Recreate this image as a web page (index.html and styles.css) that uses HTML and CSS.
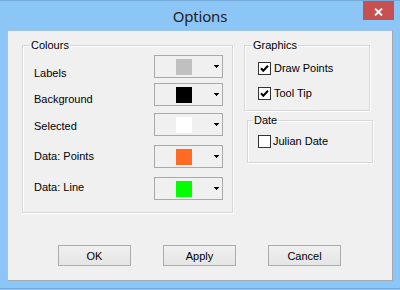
FILE: index.html
```html
<!DOCTYPE html>
<html>
<head>
<meta charset="utf-8">
<link rel="stylesheet" href="styles.css">
</head>
<body>
<div class="window">
  <div class="titlebar">
    <span class="spacer"></span>
    <div class="title">Options</div>
    <div class="close-wrap">
      <button class="close" aria-label="Close">
        <svg width="9" height="8" viewBox="0 0 9 8"><path d="M1 0.5 L8 7.5 M8 0.5 L1 7.5" stroke="#fff" stroke-width="1.8" fill="none"/></svg>
      </button>
    </div>
  </div>
  <div class="client">
    <div class="top">
      <fieldset class="group colours">
        <legend>Colours</legend>
        <div class="row r1"><span class="lbl">Labels</span><div class="picker"><span class="swatch sw-grey"></span><svg class="arrow" width="5" height="3" viewBox="0 0 5 3" shape-rendering="crispEdges"><rect x="0" y="0" width="5" height="1"/><rect x="1" y="1" width="3" height="1"/><rect x="2" y="2" width="1" height="1"/></svg></div></div>
        <div class="row r2"><span class="lbl">Background</span><div class="picker"><span class="swatch sw-black"></span><svg class="arrow" width="5" height="3" viewBox="0 0 5 3" shape-rendering="crispEdges"><rect x="0" y="0" width="5" height="1"/><rect x="1" y="1" width="3" height="1"/><rect x="2" y="2" width="1" height="1"/></svg></div></div>
        <div class="row r3"><span class="lbl">Selected</span><div class="picker"><span class="swatch sw-white"></span><svg class="arrow" width="5" height="3" viewBox="0 0 5 3" shape-rendering="crispEdges"><rect x="0" y="0" width="5" height="1"/><rect x="1" y="1" width="3" height="1"/><rect x="2" y="2" width="1" height="1"/></svg></div></div>
        <div class="row r4"><span class="lbl">Data: Points</span><div class="picker"><span class="swatch sw-orange"></span><svg class="arrow" width="5" height="3" viewBox="0 0 5 3" shape-rendering="crispEdges"><rect x="0" y="0" width="5" height="1"/><rect x="1" y="1" width="3" height="1"/><rect x="2" y="2" width="1" height="1"/></svg></div></div>
        <div class="row r5"><span class="lbl">Data: Line</span><div class="picker"><span class="swatch sw-green"></span><svg class="arrow" width="5" height="3" viewBox="0 0 5 3" shape-rendering="crispEdges"><rect x="0" y="0" width="5" height="1"/><rect x="1" y="1" width="3" height="1"/><rect x="2" y="2" width="1" height="1"/></svg></div></div>
      </fieldset>
      <div class="side">
        <fieldset class="group graphics">
          <legend>Graphics</legend>
          <label class="check c1"><svg class="box" width="13" height="13" viewBox="0 0 13 13"><rect x="0.5" y="0.5" width="12" height="12" fill="#fff" stroke="#333"/><path d="M3 6.3 L5.3 8.8 L10 3.8" stroke="#000" stroke-width="2" fill="none"/></svg><span>Draw Points</span></label>
          <label class="check c2"><svg class="box" width="13" height="13" viewBox="0 0 13 13"><rect x="0.5" y="0.5" width="12" height="12" fill="#fff" stroke="#333"/><path d="M3 6.3 L5.3 8.8 L10 3.8" stroke="#000" stroke-width="2" fill="none"/></svg><span>Tool Tip</span></label>
        </fieldset>
        <fieldset class="group date">
          <legend>Date</legend>
          <label class="check c3"><svg class="box" width="13" height="13" viewBox="0 0 13 13"><rect x="0.5" y="0.5" width="12" height="12" fill="#fff" stroke="#333"/></svg><span>Julian Date</span></label>
        </fieldset>
      </div>
    </div>
    <div class="buttons">
      <button class="btn">OK</button>
      <button class="btn">Apply</button>
      <button class="btn">Cancel</button>
    </div>
  </div>
</div>
</body>
</html>
```

FILE: styles.css
```css
html, body {
  margin: 0;
  padding: 0;
  background: #8cc6f6;
}
body {
  font-family: "Liberation Sans", Arial, sans-serif;
  font-size: 11px;
  color: #000;
}
.window {
  width: 400px;
  height: 289px;
  border-top: 1px solid #74a9da;
  border-bottom: 1px solid #74a9da;
  background: #8cc6f6;
  box-sizing: border-box;
  display: flex;
  flex-direction: column;
}
.titlebar {
  height: 29px;
  flex: none;
  display: grid;
  grid-template-columns: 1fr auto 1fr;
  padding: 0 6px;
}
.title {
  font-family: "Noto Sans", "Open Sans", sans-serif;
  font-size: 15px;
  line-height: 20px;
  letter-spacing: -0.2px;
  color: #222;
  padding-top: 5px;
}
.close-wrap {
  display: flex;
  justify-content: flex-end;
  align-items: flex-start;
}
.close {
  width: 31px;
  height: 19px;
  margin: 0;
  padding: 3px 0 0 0;
  border: none;
  background: #c75050;
  display: flex;
  justify-content: center;
  align-items: center;
}
.client {
  margin: 0 7px;
  height: 251px;
  box-sizing: border-box;
  background: #f0f0f0;
  border: 1px solid;
  border-color: #9fc3e4 #a3aab2 #a3aab2 #9fc3e4;
  padding: 8px 0 0 14px;
}
.top {
  display: flex;
  align-items: flex-start;
}
.group {
  margin: 0;
  padding: 0;
  min-width: 0;
  border: 1px solid #d7d7d7;
  box-shadow: inset 1px 1px 0 #fff, 1px 1px 0 #fff;
  box-sizing: border-box;
}
.group legend {
  padding: 0 1px;
  line-height: 13px;
  font-size: 11px;
}
.colours {
  width: 211px;
  padding: 0 9px 12px 11px;
}
.colours legend {
  margin-left: -4px;
}
.row {
  height: 23px;
  display: flex;
  justify-content: space-between;
  align-items: flex-start;
}
.lbl {
  line-height: 13px;
}
.r1 { margin-top: 3px; }
.r1 .lbl { margin-top: 12px; }
.r2 { margin-top: 5px; }
.r2 .lbl { margin-top: 10px; }
.r3 { margin-top: 7px; }
.r3 .lbl { margin-top: 7px; }
.r4 { margin-top: 9px; }
.r4 .lbl { margin-top: 5px; }
.r5 { margin-top: 9px; }
.r5 .lbl { margin-top: 4px; }
.picker {
  width: 69px;
  height: 23px;
  box-sizing: border-box;
  border: 1px solid #a9a9a9;
  background: #f0f0f0;
  display: flex;
  align-items: flex-start;
  padding: 3px 3px 0 21px;
}
.swatch {
  width: 16px;
  height: 16px;
  display: block;
}
.sw-grey { background: #c0c0c0; }
.sw-black { background: #000; }
.sw-white { background: #fff; }
.sw-orange { background: #ff6a24; }
.sw-green { background: #00ff00; }
.arrow {
  display: block;
  margin-left: auto;
  margin-top: 6px;
  fill: #000;
}
.side {
  margin-left: 11px;
  display: flex;
  flex-direction: column;
}
.graphics {
  width: 126px;
  padding: 0 0 10px 13px;
}
.graphics legend {
  margin-left: -6px;
}
.date {
  width: 126px;
  margin-top: 3px;
  margin-left: 3px;
  padding: 0 0 14px 10px;
}
.date legend {
  margin-left: -5px;
}
.check {
  display: flex;
  align-items: center;
  height: 13px;
}
.check .box {
  display: block;
  flex: none;
}
.check span {
  margin-left: 3px;
  line-height: 13px;
}
.c1 { margin-top: 10px; }
.c2 { margin-top: 12px; }
.c3 { margin-top: 8px; }
.c3 span { margin-left: 2px; }
.buttons {
  display: flex;
  gap: 32px;
  margin-top: 32px;
  padding-left: 36px;
}
.btn {
  width: 73px;
  height: 21px;
  margin: 0;
  padding: 0;
  border: 1px solid #acacac;
  background: linear-gradient(#f0f0f0, #e5e5e5);
  font-family: "Liberation Sans", Arial, sans-serif;
  font-size: 11px;
  color: #000;
}
```
